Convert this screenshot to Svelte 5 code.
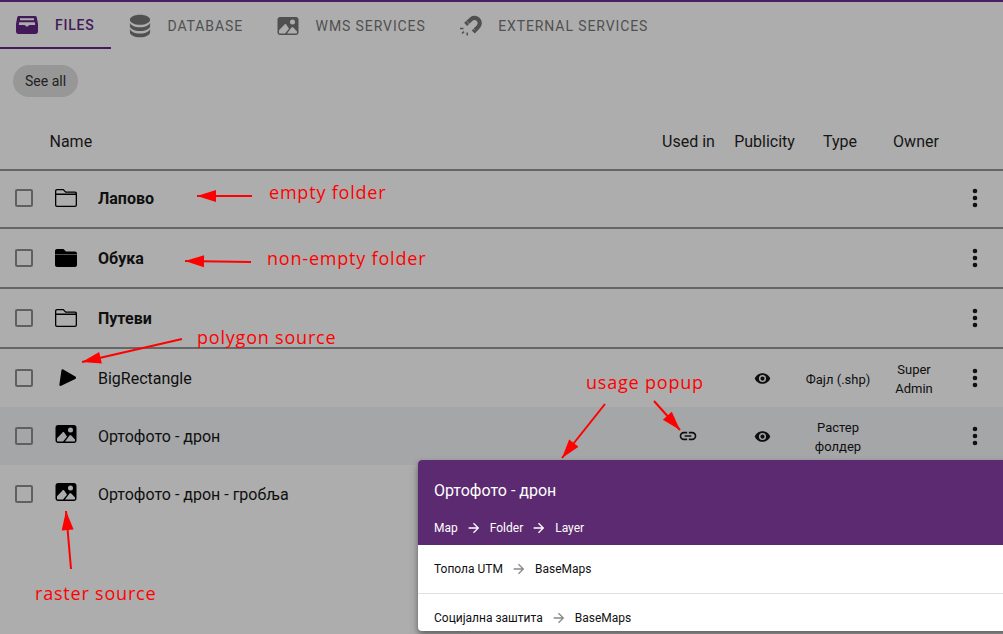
<script>
  const tabs = [
    { label: "Files", icon: "tray", active: true },
    { label: "Database", icon: "database" },
    { label: "WMS services", icon: "image" },
    { label: "External services", icon: "magnet" }
  ];

  const rows = [
    { name: "Лапово", icon: "folderOpen", folder: true },
    { name: "Обука", icon: "folder", folder: true },
    { name: "Путеви", icon: "folderOpen", folder: true },
    { name: "BigRectangle", icon: "polygon", public: true, type: "Фајл (.shp)", owner: "Super Admin" },
    { name: "Ортофото - дрон", icon: "image", used: true, public: true, type: "Растер фолдер", hover: true },
    { name: "Ортофото - дрон - гробља", icon: "image" }
  ];

  const usages = [
    { map: "Топола UTM", folder: "BaseMaps" },
    { map: "Социјална заштита", folder: "BaseMaps" }
  ];

  const notes = [
    { text: "empty folder", cls: "n1" },
    { text: "non-empty folder", cls: "n2" },
    { text: "polygon source", cls: "n3" },
    { text: "usage popup", cls: "n4" },
    { text: "raster source", cls: "n5" }
  ];

  const paths = {
    database: "M12,3C7.58,3 4,4.79 4,7C4,9.21 7.58,11 12,11C16.42,11 20,9.21 20,7C20,4.79 16.42,3 12,3M4,9V12C4,14.21 7.58,16 12,16C16.42,16 20,14.21 20,12V9C20,11.21 16.42,13 12,13C7.58,13 4,11.21 4,9M4,14V17C4,19.21 7.58,21 12,21C16.42,21 20,19.21 20,17V14C20,16.21 16.42,18 12,18C7.58,18 4,16.21 4,14Z",
    tray: "M3,3H19C20,3 20.6,3.6 20.8,4.4L22,11V18.5C22,20 21,21 19.5,21H2.5C1,21 0,20 0,18.5V11L1.2,4.4C1.4,3.6 2,3 3,3ZM4,5.2V7.2H18V5.2ZM3.2,9.2L2.8,12H8.5L11,13.8L13.5,12H19.2L18.8,9.2Z",
    image: "M4,3H20C21.4,3 22.5,4.1 22.5,5.5V18.5C22.5,19.9 21.4,21 20,21H4C2.6,21 1.5,19.9 1.5,18.5V5.5C1.5,4.1 2.6,3 4,3ZM16.5,5.5A2.5,2.5 0 0,0 14,8A2.5,2.5 0 0,0 16.5,10.5A2.5,2.5 0 0,0 19,8A2.5,2.5 0 0,0 16.5,5.5ZM3,16.2L8.5,10.6C9.2,9.9 10,10 10.4,10.7L13,14.8L9,19.5H4C3.3,19.5 3,19.2 3,18.5ZM11,19.5L15.5,13.6C16,13 16.8,13 17.3,13.6L21,17.5V18.5C21,19.2 20.7,19.5 20,19.5Z",
    folder: "M3,3H9.5L12,5.5H21C22.1,5.5 23,6.4 23,7.5V19C23,20.1 22.1,21 21,21H3C1.9,21 1,20.1 1,19V5C1,3.9 1.9,3 3,3ZM1.2,7.9V8.5H22.8V7.9Z",
    folderOpen: "M3,3H9.5L12,5.5H21C22.1,5.5 23,6.4 23,7.5V19C23,20.1 22.1,21 21,21H3C1.9,21 1,20.1 1,19V5C1,3.9 1.9,3 3,3ZM3,4.3C2.6,4.3 2.3,4.6 2.3,5V7.6H21.6C21.5,7.1 21.3,6.8 21,6.8H11.5L9,4.3ZM2.3,8.9V19C2.3,19.4 2.6,19.7 3,19.7H21C21.4,19.7 21.7,19.4 21.7,19V8.9Z",
    polygon: "M9.2,3.4L21.3,10.6C22.4,11.3 22.3,12.6 21.2,13.1L7.2,19.8C6,20.3 5.2,19.5 5.4,18.4L7.4,4.4C7.6,3.3 8.3,2.9 9.2,3.4Z",
    eye: "M12,9A3,3 0 0,0 9,12A3,3 0 0,0 12,15A3,3 0 0,0 15,12A3,3 0 0,0 12,9M12,17A5,5 0 0,1 7,12A5,5 0 0,1 12,7A5,5 0 0,1 17,12A5,5 0 0,1 12,17M12,4.5C7,4.5 2.73,7.61 1,12C2.73,16.39 7,19.5 12,19.5C17,19.5 21.27,16.39 23,12C21.27,7.61 17,4.5 12,4.5Z",
    link: "M3.9,12C3.9,10.29 5.29,8.9 7,8.9H11V7H7A5,5 0 0,0 2,12A5,5 0 0,0 7,17H11V15.1H7C5.29,15.1 3.9,13.71 3.9,12M8,13H16V11H8V13M17,7H13V8.9H17C18.71,8.9 20.1,10.29 20.1,12C20.1,13.71 18.71,15.1 17,15.1H13V17H17A5,5 0 0,0 22,12A5,5 0 0,0 17,7Z",
    dots: "M12,16A2,2 0 0,1 14,18A2,2 0 0,1 12,20A2,2 0 0,1 10,18A2,2 0 0,1 12,16M12,10A2,2 0 0,1 14,12A2,2 0 0,1 12,14A2,2 0 0,1 10,12A2,2 0 0,1 12,10M12,4A2,2 0 0,1 14,6A2,2 0 0,1 12,8A2,2 0 0,1 10,6A2,2 0 0,1 12,4Z",
    checkbox: "M19,3H5C3.89,3 3,3.89 3,5V19A2,2 0 0,0 5,21H19A2,2 0 0,0 21,19V5C21,3.89 20.1,3 19,3M19,5V19H5V5H19Z",
    arrow: "M4,11V13H16L10.5,18.5L11.92,19.92L19.84,12L11.92,4.08L10.5,5.5L16,11H4Z"
  };

  const boxes = { database: "2.5 2.5 19 19" };

  // red hand-drawn arrows on the screenshot: [x1, y1, x2, y2]
  const arrows = [
    [252, 196, 197, 196],
    [251, 262, 185, 261],
    [182, 339, 82, 362],
    [605, 404, 562, 458],
    [654, 401, 680, 430],
    [71, 569, 66, 511]
  ];

  function head([x1, y1, x2, y2]) {
    const a = Math.atan2(y2 - y1, x2 - x1);
    const l = 19, w = 6;
    const bx = x2 - l * Math.cos(a);
    const by = y2 - l * Math.sin(a);
    const nx = -Math.sin(a) * w;
    const ny = Math.cos(a) * w;
    return `${x2},${y2} ${bx + nx},${by + ny} ${bx - nx},${by - ny}`;
  }
</script>

{#snippet icon(name, size = 24)}
  {#if name === "magnet"}
    <svg width={size} height={size} viewBox="0 0 24 24" fill="none" stroke="currentColor">
      <path d="M7.6,10.4L13.4,5A5.2,5.2 0 0 1 20.6,12.4L15.3,18" stroke-width="4.2" />
      <path d="M8.9,7.4L12,10.5M13.6,13L16.7,16.1" stroke="#adadad" stroke-width="0.7" />
      <path d="M2,14.5H5.5M4,19.5L6,17.6M9.2,18.6V21.6" stroke-width="1.5" />
    </svg>
  {:else}
    <svg width={size} height={size} viewBox={boxes[name] ?? "0 0 24 24"} fill="currentColor"><path d={paths[name]} fill-rule="evenodd" /></svg>
  {/if}
{/snippet}

<div class="page">
  <nav class="tabs">
    {#each tabs as tab}
      <div class="tab" class:active={tab.active}>
        {@render icon(tab.icon)}
        <span>{tab.label}</span>
      </div>
    {/each}
  </nav>

  <div class="filters">
    <span class="chip">See all</span>
  </div>

  <div class="row head">
    <span></span>
    <span>Name</span>
    <span class="mid">Used in</span>
    <span class="mid">Publicity</span>
    <span class="mid">Type</span>
    <span class="mid">Owner</span>
    <span></span>
  </div>

  {#each rows as row}
    <div class="row item" class:folder={row.folder} class:hover={row.hover}>
      <span class="check">{@render icon("checkbox")}</span>
      <span class="file-icon" class:raised={row.icon === "image"}>{@render icon(row.icon)}</span>
      <span class="name">{row.name}</span>
      <span class="mid">{#if row.used}{@render icon("link", 20)}{/if}</span>
      <span class="mid">{#if row.public}{@render icon("eye", 17)}{/if}</span>
      <span class="mid small">{row.type ?? ""}</span>
      <span class="mid small">{row.owner ?? ""}</span>
      <span class="kebab">{@render icon("dots", 28)}</span>
    </div>
  {/each}

  <section class="popup">
    <header>
      <h2>Ортофото - дрон</h2>
      <p>
        <span>Map</span>{@render icon("arrow", 16)}<span>Folder</span>{@render icon("arrow", 16)}<span>Layer</span>
      </p>
    </header>
    {#each usages as usage}
      <div class="usage">
        <span>{usage.map}</span>
        <span class="sep">{@render icon("arrow", 16)}</span>
        <span>{usage.folder}</span>
      </div>
    {/each}
  </section>

  <svg class="marks" width="1003" height="634">
    {#each arrows as a}
      <line x1={a[0]} y1={a[1]} x2={a[2]} y2={a[3]} stroke="#f00" stroke-width="2" />
      <polygon points={head(a)} fill="#f00" />
    {/each}
  </svg>

  {#each notes as note}
    <span class="note {note.cls}">{note.text}</span>
  {/each}
</div>

<style>
  :global(body) {
    margin: 0;
    background: #adadad;
  }

  .page {
    position: relative;
    width: 1003px;
    height: 634px;
    overflow: hidden;
    box-sizing: border-box;
    border-top: 2px solid #4a1f63;
    background: #adadad;
    color: #0f0f0f;
    font-family: Roboto, sans-serif;
  }

  .tabs {
    display: flex;
    gap: 0.5px;
    height: 47px;
  }

  .tab {
    display: flex;
    align-items: center;
    gap: 16px;
    padding: 0 16px;
    box-sizing: border-box;
    height: 47px;
    color: #505050;
    font-size: 14px;
    letter-spacing: 0.9px;
    text-transform: uppercase;
  }

  .tab.active {
    width: 111px;
    gap: 15px;
    color: #43195a;
    font-weight: 500;
    letter-spacing: 0.75px;
    border-bottom: 2px solid #43195a;
  }

  .filters {
    padding: 16px 13px 0;
    height: 32px;
  }

  .chip {
    display: inline-flex;
    align-items: center;
    height: 32px;
    padding: 0 12px;
    border-radius: 16px;
    background: #979797;
    color: #222;
    font-size: 14px;
  }

  .row {
    display: grid;
    grid-template-columns: 50px 48px 1fr 75px 75px 76px 76px 51px;
    align-items: center;
    box-sizing: border-box;
  }

  .head {
    grid-template-columns: 49.5px 600.5px 77px 75px 76px 76px 49px;
    height: 74px;
    padding-top: 16px;
    font-size: 16px;
    color: #161616;
    border-bottom: 2px solid #666;
  }

  .item {
    height: 58px;
    font-size: 16px;
  }

  .item.folder {
    padding-bottom: 2px;
    border-bottom: 2px solid #666;
  }

  .item.folder + .item.folder {
    height: 60px;
    padding-bottom: 0;
  }

  .item.hover {
    background: #a5a6a8;
  }

  .check {
    display: flex;
    padding-left: 12px;
    color: #606060;
  }

  .file-icon {
    display: flex;
    padding-left: 4px;
    color: #000;
  }

  .file-icon.raised {
    padding-bottom: 4px;
  }

  .folder .name {
    font-weight: 700;
  }

  .mid {
    display: flex;
    justify-content: center;
    text-align: center;
  }

  .small {
    box-sizing: border-box;
    padding: 2px 5px 0;
    font-size: 13px;
    line-height: 19px;
  }

  .kebab {
    display: flex;
    padding-left: 9px;
    color: #111;
  }

  .popup {
    position: absolute;
    left: 418px;
    top: 458px;
    width: 640px;
    height: 171px;
    overflow: hidden;
    border-radius: 4px;
    background: #fff;
    box-shadow: 0 5px 8px rgba(0, 0, 0, 0.3), 0 2px 4px rgba(0, 0, 0, 0.2);
  }

  .popup header {
    height: 85px;
    box-sizing: border-box;
    padding: 21px 16px 0;
    background: #5c2a70;
    color: #fff;
  }

  h2 {
    margin: 0;
    font-size: 16px;
    font-weight: 400;
    line-height: 20px;
  }

  .popup p {
    display: flex;
    align-items: center;
    gap: 8px;
    margin: 19px 0 0;
    font-size: 12px;
    line-height: 16px;
  }

  .usage {
    display: flex;
    align-items: center;
    gap: 8px;
    height: 48px;
    padding: 0 16px;
    border-bottom: 1px solid #e0e0e6;
    font-size: 12px;
    color: #111;
  }

  .sep {
    display: flex;
    color: #888;
  }

  .marks {
    position: absolute;
    left: 0;
    top: -2px;
    pointer-events: none;
  }

  .note {
    position: absolute;
    color: #f00;
    font-family: "Open Sans", sans-serif;
    font-size: 18px;
    letter-spacing: 0.8px;
    line-height: 24px;
    white-space: nowrap;
  }

  .n1 { left: 269px; top: 178px; }
  .n2 { left: 267px; top: 244px; }
  .n3 { left: 197px; top: 323px; }
  .n4 { left: 586px; top: 368px; }
  .n5 { left: 35px; top: 579px; }
</style>
